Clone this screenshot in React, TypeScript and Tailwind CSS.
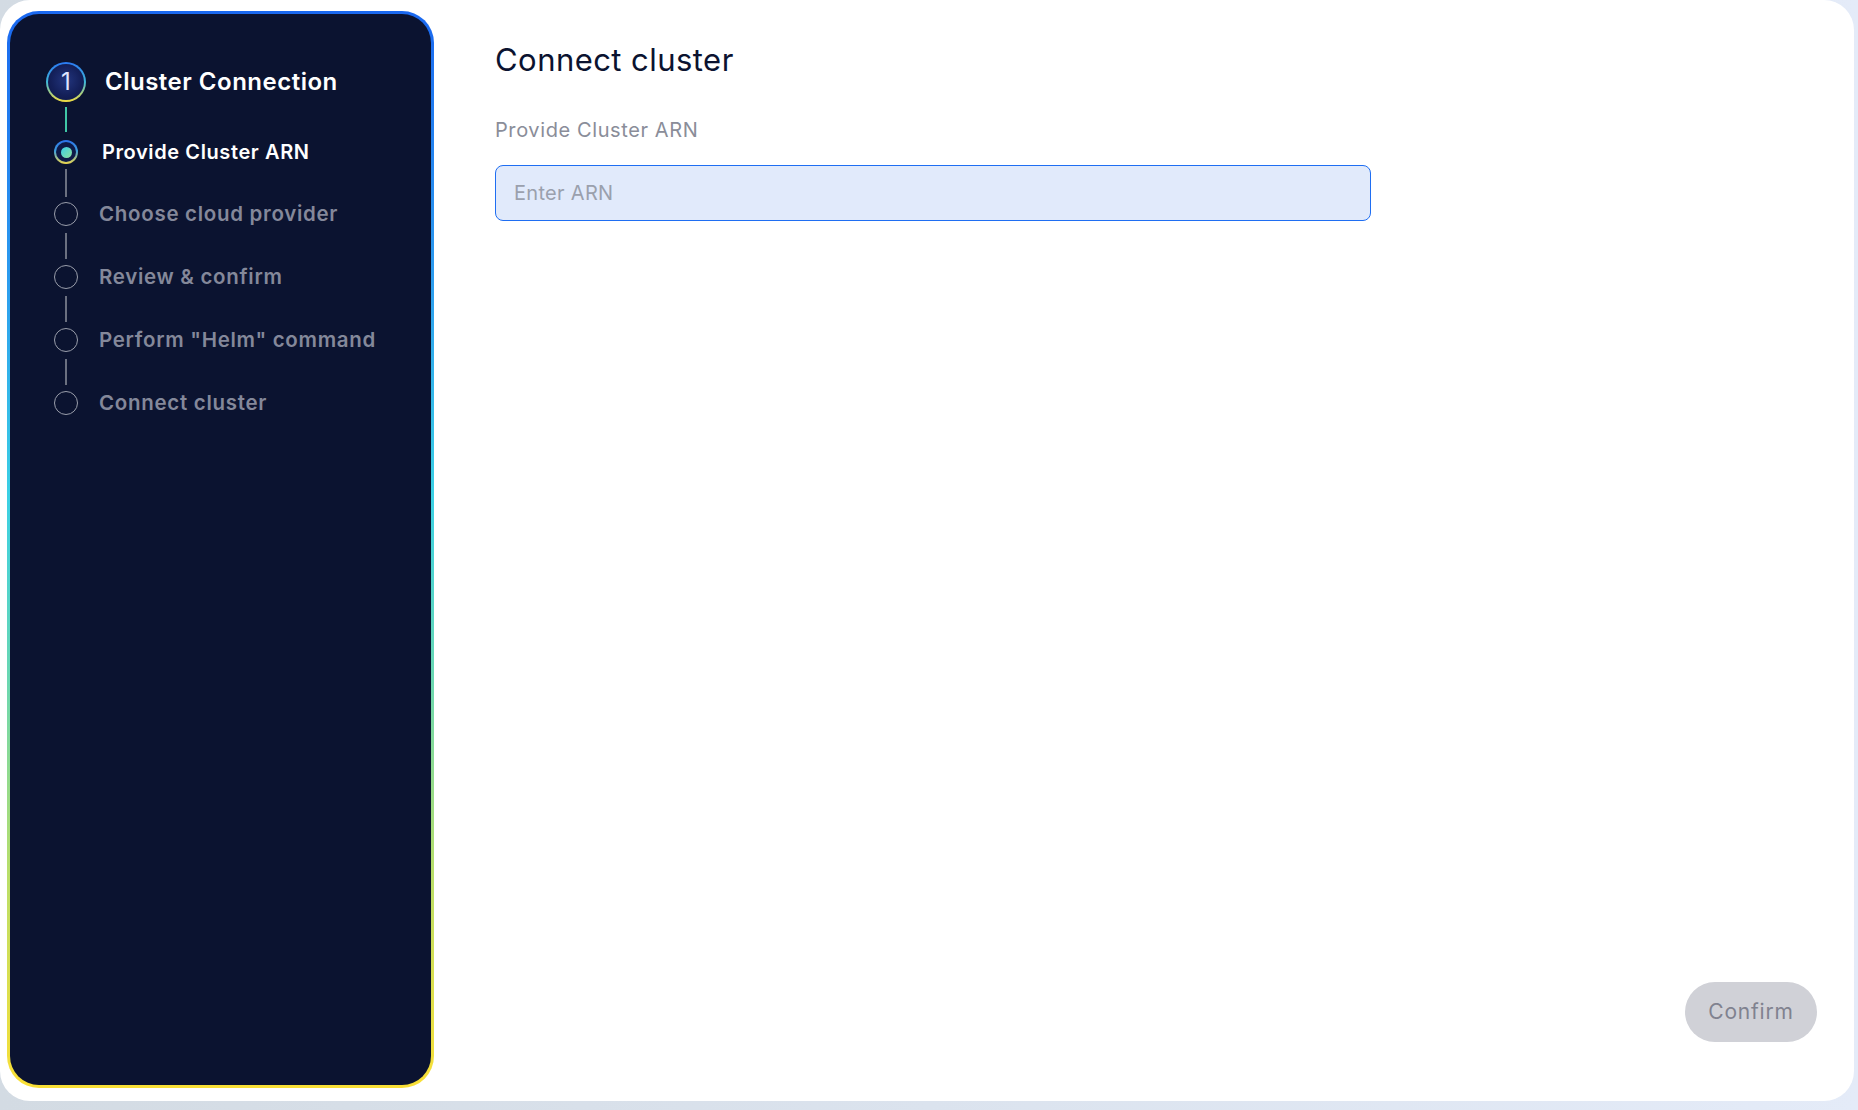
import React from "react";

const steps = [
  { label: "Choose cloud provider" },
  { label: "Review & confirm" },
  { label: 'Perform "Helm" command' },
  { label: "Connect cluster" },
];

function Connector({ color, className }: { color: string; className: string }) {
  return (
    <div className="flex w-[40px] justify-center">
      <div className={`w-[2px] ${color} ${className}`} />
    </div>
  );
}

export default function App() {
  return (
    <div
      className="w-[1858px] h-[1110px] bg-[linear-gradient(90deg,#d3dbe3_0%,#dbe3ee_50%,#e4ebf8_100%)] overflow-hidden"
      style={{ fontFamily: '"Inter", "Noto Sans", sans-serif' }}
    >
      <div className="flex w-[1854px] h-[1101px] bg-white rounded-[30px] pl-[7px] pt-[11px] pb-[13px]">
        {/* Sidebar */}
        <div className="w-[427px] h-full shrink-0 rounded-[32px] p-[3px] bg-[linear-gradient(180deg,#1a68f0_0%,#2c9cee_25%,#3bd0e4_45%,#6ad7b2_62%,#b8de6a_80%,#fadf35_100%)]">
          <div className="w-full h-full rounded-[29px] bg-[#0b1330] pl-[36px] pt-[48px]">
            {/* Header */}
            <div className="flex items-center">
              <div className="w-[40px] h-[40px] rounded-full p-[2px] bg-[linear-gradient(180deg,#2a78f2_0%,#3fb7d7_50%,#f3dc3f_100%)]">
                <div className="w-full h-full rounded-full bg-[radial-gradient(circle_at_50%_45%,#22357e_0%,#14205a_55%,#0d1540_100%)] flex items-center justify-center text-[24px] leading-none text-[#dfe4ff] font-normal">
                  1
                </div>
              </div>
              <div className="ml-[19px] text-[24px] font-semibold text-white tracking-[0.5px]">
                Cluster Connection
              </div>
            </div>
            <Connector color="bg-[#3fc6a6]" className="mt-[5px] h-[25px] mb-[8px]" />
            {/* Active sub step */}
            <div className="flex items-center h-[24px]">
              <div className="flex w-[40px] justify-center">
                <div className="w-[24px] h-[24px] rounded-full p-[2px] bg-[linear-gradient(180deg,#2a70ea_0%,#3e9fdc_45%,#efd74a_100%)]">
                  <div className="w-full h-full rounded-full bg-[#0e1a48] flex items-center justify-center">
                    <div className="w-[11px] h-[11px] rounded-full bg-[linear-gradient(135deg,#3ad0ea_0%,#8ee29c_100%)]" />
                  </div>
                </div>
              </div>
              <div className="ml-[16px] text-[20px] font-semibold text-white tracking-[0.6px]">
                Provide Cluster ARN
              </div>
            </div>
            {steps.map((s, i) => (
              <div key={i}>
                <Connector
                  color="bg-[#6b7080]"
                  className={i === 0 ? "mt-[5px] h-[28px] mb-[5px]" : "mt-[7px] h-[26px] mb-[6px]"}
                />
                <div className="flex items-center h-[24px]">
                  <div className="flex w-[40px] justify-center">
                    <div className="w-[24px] h-[24px] rounded-full border-[1.5px] border-[#9a9eab]" />
                  </div>
                  <div className="ml-[13px] text-[20.5px] font-semibold text-[#84889a] tracking-[0.7px]">
                    {s.label}
                  </div>
                </div>
              </div>
            ))}
          </div>
        </div>

        {/* Main */}
        <div className="flex-1 flex flex-col pl-[61px] pr-[37px] pt-[29px] pb-[46px]">
          <h1 className="text-[31px] leading-[40px] font-normal text-[#0b1330] tracking-[0.45px]">
            Connect cluster
          </h1>
          <div className="mt-[36px] text-[20px] leading-[28px] text-[#8a8d99] tracking-[0.6px]">Provide Cluster ARN</div>
          <input
            className="mt-[21px] w-[876px] h-[56px] rounded-[8px] border-[1.5px] border-[#1f6ef2] bg-[#e1eafb] pl-[18px] text-[20px] tracking-[0.3px] text-[#0b1330] placeholder:text-[#9aa0ad] outline-none"
            placeholder="Enter ARN"
          />
          <div className="flex-1" />
          <div className="flex justify-end">
            <button className="w-[132px] h-[60px] rounded-full bg-[#d0d1d7] text-[21px] tracking-[0.8px] text-[#80828f]">
              Confirm
            </button>
          </div>
        </div>
      </div>
    </div>
  );
}
